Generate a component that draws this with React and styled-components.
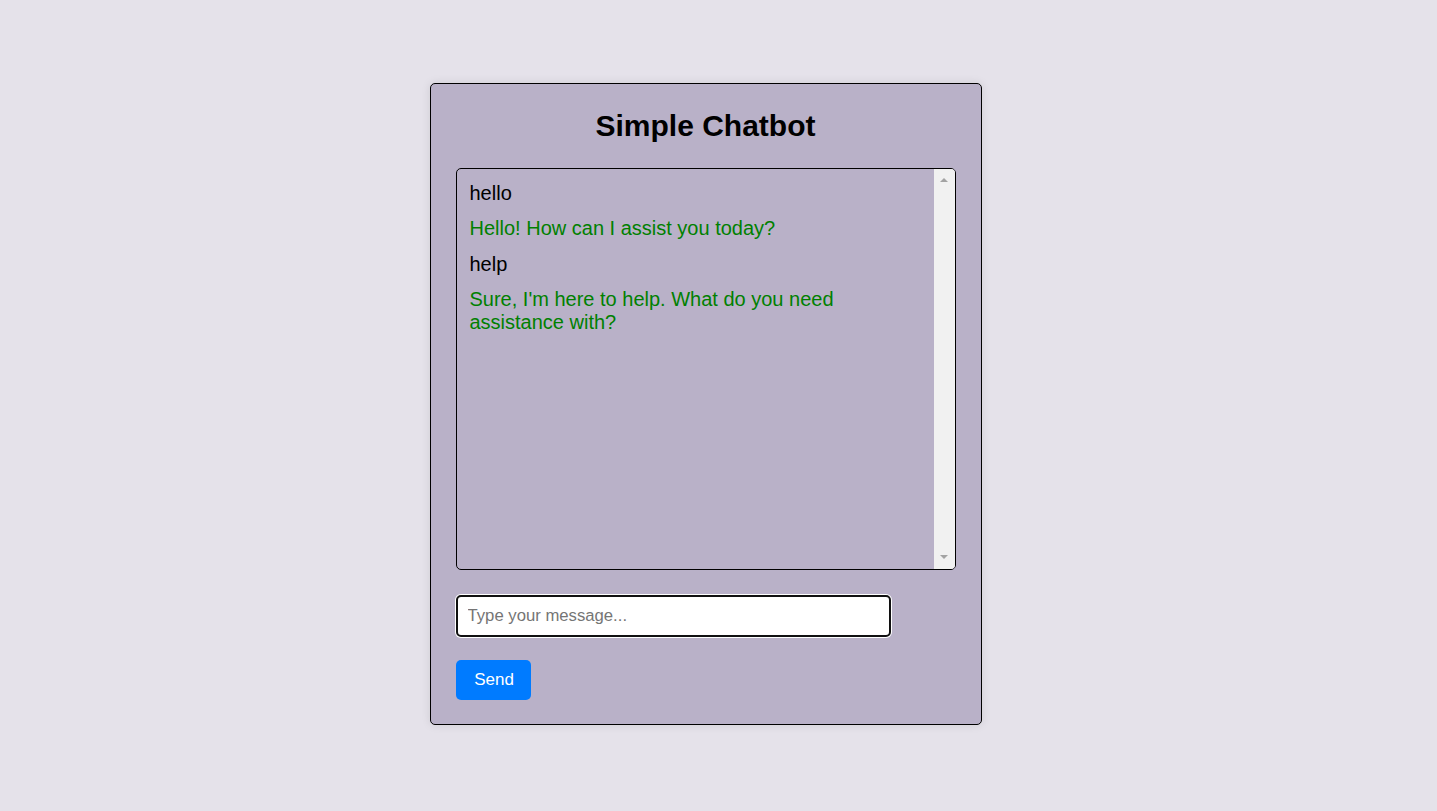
import React from "react";
import styled, { createGlobalStyle } from "styled-components";

const Global = createGlobalStyle`
  html, body { margin: 0; padding: 0; }
  body {
    background: #e5e2ea;
    font-family: "Liberation Sans", Arial, sans-serif;
  }
`;

const Page = styled.div`
  min-height: 811px;
  display: flex;
  justify-content: center;
  align-items: flex-start;
  padding: 83px 26px 0 0;
  box-sizing: border-box;
`;

const Card = styled.div`
  width: 500px;
  background: #b9b1c8;
  border: 1px solid #000;
  border-radius: 5px;
  box-shadow: 0 0 10px rgba(0, 0, 0, 0.1);
  padding: 24px 25px;
  display: flex;
  flex-direction: column;
  align-items: flex-start;
`;

const Title = styled.h1`
  align-self: stretch;
  margin: 0 0 24px;
  text-align: center;
  font-size: 30px;
  line-height: 36px;
  font-weight: bold;
  color: #000;
`;

const ChatBox = styled.div`
  width: 500px;
  height: 402px;
  box-sizing: border-box;
  border: 1px solid #000;
  border-radius: 5px;
  display: flex;
  overflow: hidden;
  margin-bottom: 25px;
`;

const Messages = styled.div`
  flex: 1;
  min-width: 0;
  padding: 7px 12px 7px 13px;
  overflow: hidden;
`;

const ScrollTrack = styled.div`
  width: 21px;
  flex: none;
  background: #f1f1f1;
  display: flex;
  flex-direction: column;
  justify-content: space-between;
  align-items: center;
  padding: 9px 0 10px;
`;

const Arrow = styled.span`
  width: 0;
  height: 0;
  border-left: 4.5px solid transparent;
  border-right: 4.5px solid transparent;
  ${(p) =>
    p.$down
      ? "border-top: 4.5px solid #a3a3a3;"
      : "border-bottom: 4.5px solid #a3a3a3;"}
`;

const Message = styled.div`
  font-size: 20px;
  line-height: 23px;
  margin: 6px 0 12.4px;
  color: ${(p) => (p.$bot ? "#008000" : "#000")};
`;

const Input = styled.input`
  width: 435px;
  height: 42px;
  box-sizing: border-box;
  border: 2px solid #101010;
  border-radius: 5px;
  box-shadow: 0 0 0 1px #fff;
  outline: none;
  padding: 0 10px;
  font-family: "Liberation Sans", Arial, sans-serif;
  font-size: 16.7px;
  margin-bottom: 23px;
  background: #fff;
  &::placeholder { color: #757575; }
`;

const Button = styled.button`
  width: 75px;
  height: 40px;
  border: none;
  border-radius: 5px;
  background: #007bff;
  color: #fff;
  font-family: "Liberation Sans", Arial, sans-serif;
  font-size: 17px;
  padding: 0 0 0 2px;
  cursor: pointer;
`;

export default function App() {
  const msgs = [
    { t: "hello", bot: false },
    { t: "Hello! How can I assist you today?", bot: true },
    { t: "help", bot: false },
    { t: "Sure, I'm here to help. What do you need assistance with?", bot: true },
  ];
  return (
    <>
      <Global />
      <Page>
        <Card>
          <Title>Simple Chatbot</Title>
          <ChatBox>
            <Messages>
              {msgs.map((m, i) => (
                <Message key={i} $bot={m.bot}>{m.t}</Message>
              ))}
            </Messages>
            <ScrollTrack>
              <Arrow />
              <Arrow $down />
            </ScrollTrack>
          </ChatBox>
          <Input placeholder="Type your message..." autoFocus />
          <Button>Send</Button>
        </Card>
      </Page>
    </>
  );
}
